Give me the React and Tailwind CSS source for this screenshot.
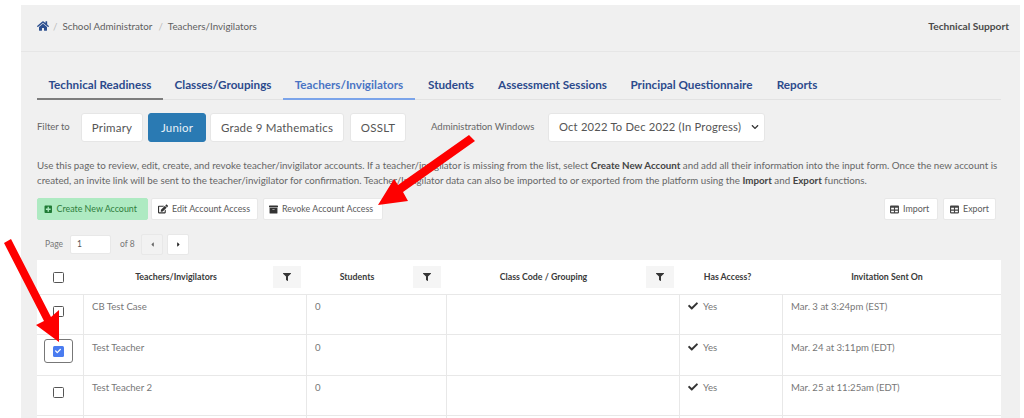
import React from "react";
import { FaHome, FaFilter, FaCheck, FaPlusSquare, FaEdit, FaArchive, FaTable, FaCaretLeft, FaCaretRight, FaChevronDown } from "react-icons/fa";

const font = { fontFamily: '"Lato", "Noto Sans", sans-serif' };
const tabs = [
  ["Technical Readiness", "w-[126px] border-b-2 border-[#7d7d7d]", "text-[#2c4a8c]"],
  ["Classes/Groupings", "w-[120px]", "text-[#2c4a8c]"],
  ["Teachers/Invigilators", "w-[132px] border-b-2 border-[#7ba4ea]", "text-[#4a74c4]"],
  ["Students", "w-[72px]", "text-[#2c4a8c]"],
  ["Assessment Sessions", "w-[131px]", "text-[#2c4a8c]"],
  ["Principal Questionnaire", "w-[147px]", "text-[#2c4a8c]"],
  ["Reports", "w-[64px]", "text-[#2c4a8c]"],
];
const rows = [
  ["CB Test Case", "Mar. 3 at 3:24pm (EST)", "h-[40px]", false, "pt-[5px]"],
  ["Test Teacher", "Mar. 24 at 3:11pm (EDT)", "h-[41px]", true, "pt-[6px]"],
  ["Test Teacher 2", "Mar. 25 at 11:25am (EDT)", "h-[40px]", false, "pt-[5px]"],
];

function FilterBtn({ children, active, w }) {
  return (
    <div className={`${w} h-[29px] flex items-center justify-center rounded-[3px] border text-[11.5px] tracking-[0.2px] ${active ? "bg-[#2a7ab3] border-[#2a7ab3] text-[#e8f1f7]" : "bg-white border-[#e6e6e6] text-[#555]"}`}>
      {children}
    </div>
  );
}
function ActionBtn({ icon, children, w, className = "bg-white border-[#e8e8e8] text-[#5a5a5a]" }) {
  return (
    <div className={`${w} h-[22px] flex items-center gap-[4px] rounded-[2px] border text-[8.9px] ${className}`}>
      {icon}
      <span>{children}</span>
    </div>
  );
}
function Box() {
  return <div className="w-[11px] h-[11px] border-[1.5px] border-[#555] rounded-[1.5px] bg-white" />;
}
function Th({ children, filter, w, off, pr }) {
  return (
    <div className={`${w} ${pr} relative flex items-center justify-center`}>
      <span className="font-bold text-[8.8px] text-[#3a3a3a]">{children}</span>
      {filter && (
        <div className={`absolute ${off} top-[6px] w-[28px] h-[22px] bg-[#f5f5f5] flex items-center justify-center`}>
          <FaFilter className="text-[#363636] text-[8px]" />
        </div>
      )}
    </div>
  );
}

export default function App() {
  return (
    <div className="relative w-[1024px] h-[418px] overflow-hidden bg-white" style={font}>
      <div className="ml-[21px] mr-[4px] mt-[5px] h-[413px] bg-[#f0f0f0]">
        <div className="h-[47px] border-b border-[#e6e6e6] flex items-start justify-between pl-[16px] pr-[11px] pt-[14px] text-[9.8px] text-[#5f5f5f]">
          <div className="flex items-center">
            <FaHome className="text-[#2c4f8f] text-[12px]" />
            <span className="text-[#bbb] ml-[4px] mr-[5px]">/</span>
            <span>School Administrator</span>
            <span className="text-[#bbb] ml-[6px] mr-[5px]">/</span>
            <span>Teachers/Invigilators</span>
          </div>
          <span className="font-bold text-[10.2px] text-[#4a4a4a]">Technical Support</span>
        </div>

        <div className="pl-[16px] w-[980px]">
          <div className="mt-[23px] h-[25px] flex border-b border-[#e2e2e2] text-[11.7px] font-bold">
            {tabs.map(([t, c, col]) => (
              <div key={t} className={`${c} ${col} h-[25px] flex items-start justify-center pt-[1px]`}>
                {t}
              </div>
            ))}
          </div>

          <div className="mt-[13px] flex items-center">
            <span className="w-[44px] text-[9.5px] text-[#666]">Filter to</span>
            <div className="flex">
              <FilterBtn w="w-[62px]">Primary</FilterBtn>
              <FilterBtn w="w-[58px] ml-[5px]" active>Junior</FilterBtn>
              <FilterBtn w="w-[134px] ml-[4px]">Grade 9 Mathematics</FilterBtn>
              <FilterBtn w="w-[56px] ml-[6px]">OSSLT</FilterBtn>
            </div>
            <span className="ml-[25px] w-[117px] text-[9.5px] text-[#666]">Administration Windows</span>
            <div className="w-[217px] h-[29px] -mt-[1px] bg-white border border-[#e6e6e6] rounded-[3px] flex items-center pl-[10px] pr-[3px] justify-between whitespace-nowrap text-[11.2px] text-[#555] tracking-[0.2px]">
              <span>Oct 2022 To Dec 2022 (In Progress)</span>
              <FaChevronDown className="text-[8px] text-[#333] mr-[2px]" />
            </div>
          </div>

          <p className="mt-[16px] w-[975px] text-[9.77px] leading-[15px] text-[#666]">
            Use this page to review, edit, create, and revoke teacher/invigilator accounts. If a teacher/invigilator is missing from the list, select <b className="text-[#444]">Create New Account</b> and add all their information into the input form. Once the new account is created, an invite link will be sent to the teacher/invigilator for confirmation. Teacher/Invigilator data can also be imported to or exported from the platform using the <b className="text-[#444]">Import</b> and <b className="text-[#444]">Export</b> functions.
          </p>

          <div className="mt-[10px] flex items-center">
            <ActionBtn w="w-[111px] pl-[6px]" className="bg-[#aeeac2] border-[#aeeac2] text-[#2e7d3c]" icon={<FaPlusSquare className="text-[#1f7a35] text-[8.5px]" />}>Create New Account</ActionBtn>
            <ActionBtn w="w-[107px] ml-[3px] pl-[6px]" icon={<FaEdit className="text-[#333] text-[10px]" />}>Edit Account Access</ActionBtn>
            <ActionBtn w="w-[120px] ml-[5px] pl-[5px]" icon={<FaArchive className="text-[#333] text-[9px]" />}>Revoke Account Access</ActionBtn>
            <ActionBtn w="w-[54px] ml-auto pl-[5px]" icon={<FaTable className="text-[#444] text-[9px]" />}>Import</ActionBtn>
            <ActionBtn w="w-[53px] ml-[5px] mr-[5px] pl-[6px]" icon={<FaTable className="text-[#444] text-[9px]" />}>Export</ActionBtn>
          </div>

          <div className="mt-[14px] flex items-center pl-[8px] text-[8.5px] text-[#777]">
            <span className="w-[25px]">Page</span>
            <div className="w-[41px] h-[19px] bg-white border border-[#e8e8e8] rounded-[2px] flex items-center pl-[6px] text-[#555]">1</div>
            <span className="ml-[9px] w-[21px]">of 8</span>
            <div className="w-[22px] h-[21px] bg-[#f2f2f2] border border-[#e8e8e8] rounded-[2px] flex items-center justify-center"><FaCaretLeft className="text-[#666] text-[7px]" /></div>
            <div className="ml-[4px] w-[22px] h-[21px] bg-white border border-[#e8e8e8] rounded-[2px] flex items-center justify-center"><FaCaretRight className="text-[#222] text-[7px]" /></div>
          </div>

          <div className="mt-[5px] w-[964px] bg-white">
            <div className="h-[35px] flex border-b-[1.5px] border-[#e8e8e8]">
              <div className="w-[47px] flex items-center justify-center pr-[4px]"><Box /></div>
              <Th w="w-[223px]" pr="pr-[39px]" filter off="right-[6px]">Teachers/Invigilators</Th>
              <Th w="w-[140px]" pr="pr-[40px]" filter off="right-[6px]">Students</Th>
              <Th w="w-[233px]" pr="pr-[40px]" filter off="right-[6px]">Class Code / Grouping</Th>
              <Th w="w-[103px]" pr="pr-[8px]">Has Access?</Th>
              <Th w="w-[218px]" pr="pr-[10px]">Invitation Sent On</Th>
            </div>
            {rows.map(([name, date, h, sel, pt]) => (
              <div key={name} className={`${h} flex border-b-[1.5px] border-[#e8e8e8] text-[9.6px] text-[#777]`}>
                <div className={`w-[47px] border-r-[1.5px] border-[#e8e8e8] flex items-start justify-center pr-[4px] ${sel ? "pt-[4px]" : "pt-[11px]"}`}>
                  {sel ? (
                    <div className="w-[29px] h-[24px] border border-[#777] rounded-[3px] flex items-center justify-center">
                      <div className="w-[11px] h-[11px] rounded-[1.5px] bg-[#4a7cf0] flex items-center justify-center"><FaCheck className="text-white text-[6px]" /></div>
                    </div>
                  ) : (
                    <Box />
                  )}
                </div>
                <div className={`w-[223px] border-r-[1.5px] border-[#e8e8e8] pl-[8px] ${pt}`}>{name}</div>
                <div className={`w-[140px] border-r-[1.5px] border-[#e8e8e8] pl-[8px] ${pt}`}>0</div>
                <div className="w-[233px] border-r-[1.5px] border-[#e8e8e8]" />
                <div className={`w-[103px] border-r-[1.5px] border-[#e8e8e8] pl-[8px] flex items-start gap-[5px] ${pt}`}>
                  <FaCheck className="text-[#333] text-[10px] mt-[1px]" />
                  <span>Yes</span>
                </div>
                <div className={`w-[218px] pl-[8px] ${pt}`}>{date}</div>
              </div>
            ))}
            <div className="h-[10px] flex">
              <div className="w-[47px] border-r-[1.5px] border-[#e8e8e8]" />
              <div className="w-[223px] border-r-[1.5px] border-[#e8e8e8]" />
              <div className="w-[140px] border-r-[1.5px] border-[#e8e8e8]" />
              <div className="w-[233px] border-r-[1.5px] border-[#e8e8e8]" />
              <div className="w-[103px] border-r-[1.5px] border-[#e8e8e8]" />
            </div>
          </div>
        </div>
      </div>

      <svg className="absolute left-0 top-0 pointer-events-none" width="1024" height="418" viewBox="0 0 1024 418">
        <polygon fill="#fe0000" points="469,135 475,141 403,192 408,201 378,205 394,179 398,185" />
        <polygon fill="#fe0000" points="4,243 11,239 51,317 59,310 59,342 36,325 44,321" />
      </svg>
    </div>
  );
}
